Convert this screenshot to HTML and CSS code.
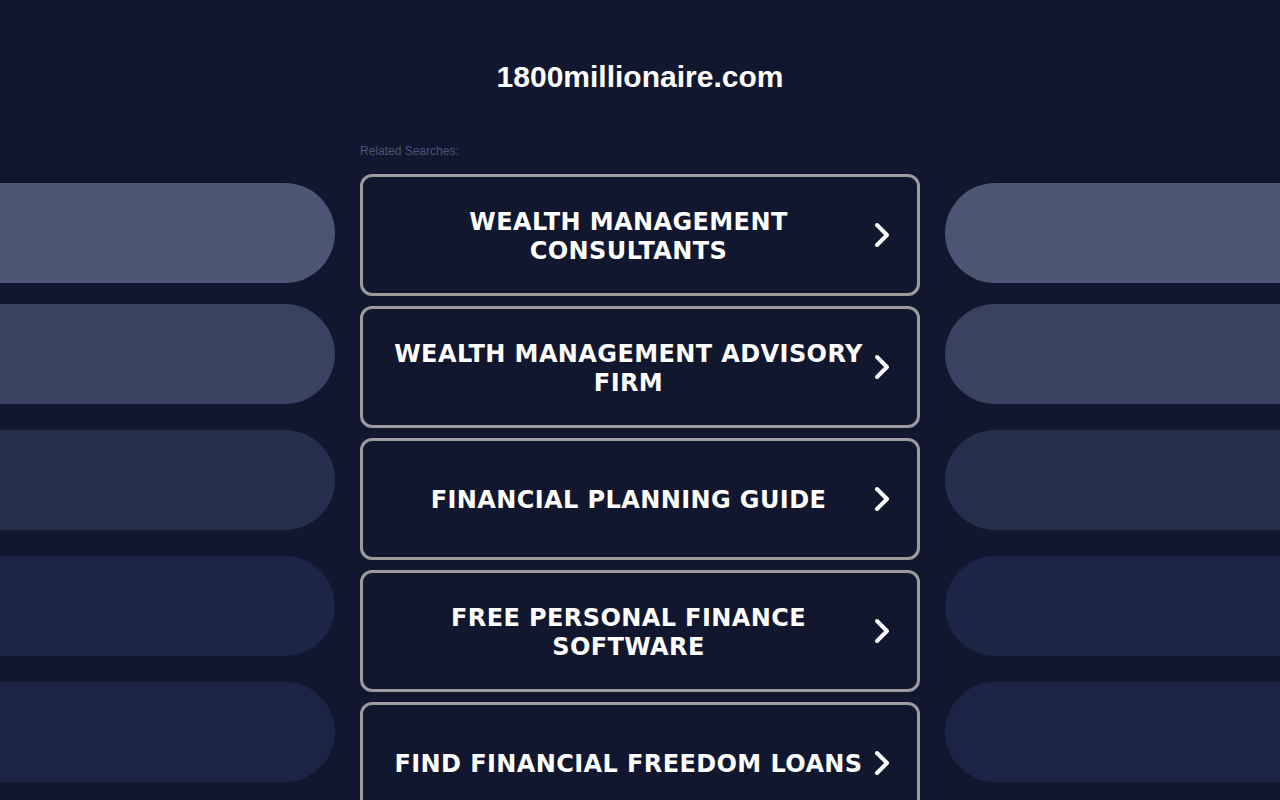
FILE: index.html
```html
<!DOCTYPE html>
<html lang="en">
<head>
<meta charset="utf-8">
<title>1800millionaire.com</title>
<link rel="stylesheet" href="styles.css">
</head>
<body>
<header class="header">
  <h1 class="domain">1800millionaire.com</h1>
</header>
<main class="layout">
  <div class="side side-left">
    <div class="pill pill-1"></div>
    <div class="pill pill-2"></div>
    <div class="pill pill-3"></div>
    <div class="pill pill-4"></div>
    <div class="pill pill-5"></div>
  </div>
  <div class="center">
    <div class="related">Related Searches:</div>
    <div class="links">
      <a class="link" href="#"><span class="link-text">WEALTH MANAGEMENT CONSULTANTS</span><svg class="chev" width="16" height="26" viewBox="0 0 16 26"><path d="M3 3 L13 13 L3 23" /></svg></a>
      <a class="link" href="#"><span class="link-text">WEALTH MANAGEMENT ADVISORY FIRM</span><svg class="chev" width="16" height="26" viewBox="0 0 16 26"><path d="M3 3 L13 13 L3 23" /></svg></a>
      <a class="link" href="#"><span class="link-text">FINANCIAL PLANNING GUIDE</span><svg class="chev" width="16" height="26" viewBox="0 0 16 26"><path d="M3 3 L13 13 L3 23" /></svg></a>
      <a class="link" href="#"><span class="link-text">FREE PERSONAL FINANCE SOFTWARE</span><svg class="chev" width="16" height="26" viewBox="0 0 16 26"><path d="M3 3 L13 13 L3 23" /></svg></a>
      <a class="link" href="#"><span class="link-text">FIND FINANCIAL FREEDOM LOANS</span><svg class="chev" width="16" height="26" viewBox="0 0 16 26"><path d="M3 3 L13 13 L3 23" /></svg></a>
    </div>
  </div>
  <div class="side side-right">
    <div class="pill pill-1"></div>
    <div class="pill pill-2"></div>
    <div class="pill pill-3"></div>
    <div class="pill pill-4"></div>
    <div class="pill pill-5"></div>
  </div>
</main>
</body>
</html>
```
FILE: styles.css
```css
html, body {
  margin: 0;
  padding: 0;
  overflow: hidden;
  height: 800px;
}
body {
  background: #11172e;
  font-family: "Liberation Sans", Arial, sans-serif;
}
.header {
  padding-top: 60px;
  height: 80px;
}
.domain {
  margin: 0;
  text-align: center;
  color: #ffffff;
  font-size: 30px;
  line-height: 34px;
  font-weight: 700;
}
.layout {
  display: grid;
  grid-template-columns: 335px 560px 1fr;
  column-gap: 25px;
}
.side {
  display: flex;
  flex-direction: column;
  padding-top: 43px;
}
.pill {
  height: 100px;
  flex: none;
}
.pill + .pill {
  margin-top: 26px;
}
.pill-1 { margin-bottom: -5px; background: #4c5573; }
.pill-2 { background: #3a4261; }
.pill-3 { background: #262f4e; }
.pill-4 { background: #1c2546; }
.pill-5 { background: #1b2444; }
.side-left .pill { border-radius: 0 50px 50px 0; }
.side-right .pill { border-radius: 50px 0 0 50px; }
.related {
  margin-top: 4px;
  font-size: 12px;
  line-height: 14px;
  color: #4a5577;
}
.links {
  margin-top: 16px;
  display: flex;
  flex-direction: column;
  gap: 10px;
}
.link {
  box-sizing: border-box;
  height: 122px;
  border: 3px solid #9c9c9f;
  border-radius: 12px;
  display: flex;
  align-items: center;
  padding: 3px 27px 0 20px;
  text-decoration: none;
  color: #ffffff;
}
.link-text {
  flex: 1;
  text-align: center;
  font-family: "DejaVu Sans", Verdana, sans-serif;
  font-weight: 700;
  font-size: 24px;
  letter-spacing: 0.4px;
  line-height: 29px;
}
.chev {
  flex: none;
  margin-top: -3px;
  fill: none;
  stroke: #ffffff;
  stroke-width: 4;
  stroke-linecap: round;
  stroke-linejoin: round;
}
```
